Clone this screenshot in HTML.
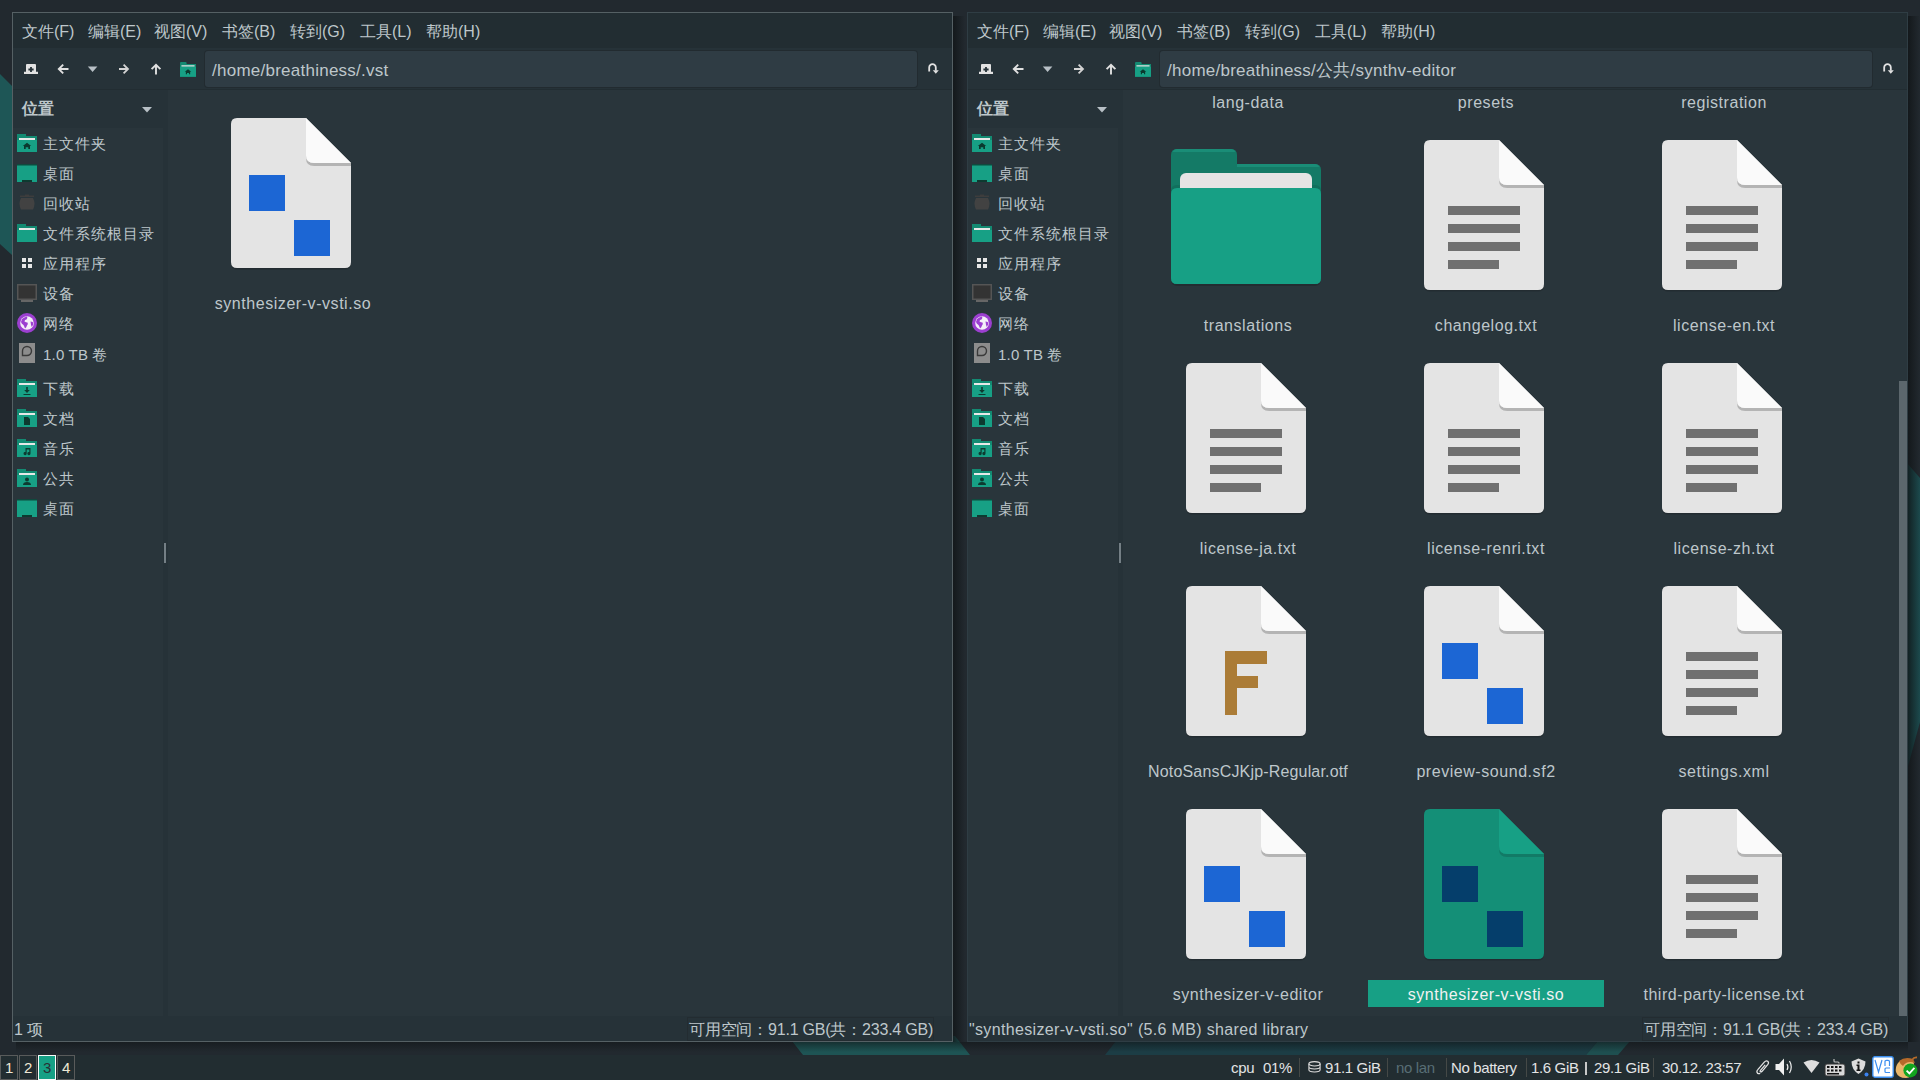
<!DOCTYPE html><html><head><meta charset="utf-8"><style>
*{margin:0;padding:0;box-sizing:border-box}
html,body{width:1920px;height:1080px;overflow:hidden;background:#1d2326;font-family:"Liberation Sans", sans-serif;color:#bec7cb}
div,span,svg{position:absolute}
.t{white-space:nowrap;font-size:16px;line-height:18px;color:#bec7cb}
.lbl{white-space:nowrap;font-size:16px;line-height:20px;color:#bec7cb;letter-spacing:0.55px;text-align:center;width:236px}
</style></head><body>
<div style="left:0;top:0;width:1920px;height:1080px;background:#22292f"></div>
<svg style="left:0;top:0" width="1920" height="1080" viewBox="0 0 1920 1080">
<polygon points="0,74 12,86 12,255 0,244" fill="#1e5656"/>
<polygon points="1907,463 1920,478 1920,722 1907,770" fill="#1c4a4d"/>
<polygon points="792,1041 950,1041 950,1036 955,1036 970,1055 803,1055" fill="#1e5454"/>
<polygon points="1116,1041 1598,1041 1586,1055 1105,1055" fill="#1c3d45"/>
<polygon points="1598,1041 1630,1041 1618,1055 1586,1055" fill="#1e4f50"/>
<defs><linearGradient id="sh" x1="0" x2="1" y1="0" y2="0"><stop offset="0" stop-color="#0f1315" stop-opacity="0.75"/><stop offset="1" stop-color="#0f1315" stop-opacity="0"/></linearGradient></defs><rect x="953" y="16" width="12" height="1026" fill="url(#sh)"/>
<rect x="1908" y="16" width="12" height="1026" fill="url(#sh)"/><linearGradient id="shv" x1="0" x2="0" y1="0" y2="1"><stop offset="0" stop-color="#0f1315" stop-opacity="0.55"/><stop offset="1" stop-color="#0f1315" stop-opacity="0"/></linearGradient><rect x="16" y="1042" width="1892" height="10" fill="url(#shv)"/>
</svg>
<div style="left:12px;top:12px;width:941px;height:1030px;border:1px solid #556064;background:#29353b"></div>
<div style="left:13px;top:13px;width:939px;height:35px;background:#222d32"></div>
<span class="t" style="left:22px;top:23px">文件(F)</span>
<span class="t" style="left:88px;top:23px">编辑(E)</span>
<span class="t" style="left:154px;top:23px">视图(V)</span>
<span class="t" style="left:222px;top:23px">书签(B)</span>
<span class="t" style="left:290px;top:23px">转到(G)</span>
<span class="t" style="left:360px;top:23px">工具(L)</span>
<span class="t" style="left:426px;top:23px">帮助(H)</span>
<div style="left:13px;top:48px;width:939px;height:41px;background:#263238"></div>
<div style="left:13px;top:89px;width:939px;height:1px;background:#222d32"></div>
<svg style="left:24px;top:63px" width="14" height="11" viewBox="0 0 14 11"><path d="M0 11 V8.8 H2 V2 Q2 1 3 1 H11 Q12 1 12 2 V8.8 H14 V11 Z" fill="#e2e2e2"/><path d="M6.1 3.9 h1.8 v1.7 h1.7 v1.8 h-1.7 v1.7 h-1.8 v-1.7 h-1.7 v-1.8 h1.7z" fill="#263238"/></svg>
<svg style="left:57px;top:63px" width="12" height="12" viewBox="0 0 12 12"><path d="M2 6 h9.5 M6.2 1.6 L1.8 6 L6.2 10.4" stroke="#e0e0e0" stroke-width="1.9" fill="none"/></svg>
<svg style="left:87px;top:66px" width="11" height="7" viewBox="0 0 11 7"><path d="M0.8 0.6 h9.6 l-4.8 5.4z" fill="#b8c0c6"/></svg>
<svg style="left:118px;top:63px" width="12" height="12" viewBox="0 0 12 12"><path d="M1 6 h9 M5.6 1.6 L10 6 L5.6 10.4" stroke="#d4d4d4" stroke-width="1.8" fill="none"/></svg>
<svg style="left:150px;top:63px" width="12" height="12" viewBox="0 0 12 12"><path d="M6 11.5 v-9.5 M1.6 6.2 L6 1.8 L10.4 6.2" stroke="#e0e0e0" stroke-width="1.9" fill="none"/></svg>
<svg style="left:180px;top:61.5px" width="16" height="15" viewBox="0 0 17 16"><path d="M0 1 q0 -1 1 -1 h5 q1 0 1 1 v1 h10 v14 h-17z" fill="#138a72"/><rect x="1.5" y="3.5" width="14" height="1.5" fill="#e8e8e8"/><rect x="0" y="5" width="17" height="10.5" fill="#17a085"/><path d="M8.5 7.6 L12 10.4 L10.8 10.4 L10.8 13 L9.6 13 L9.6 11.6 L7.4 11.6 L7.4 13 L6.2 13 L6.2 10.4 L5 10.4 Z" fill="#0a3a2f"/></svg>
<div style="left:205px;top:51px;width:712px;height:36px;background:#2f3c44;border-radius:3px;box-shadow:0 0 0 1px #222b30"></div>
<span class="t" style="left:212px;top:61px;font-size:17px;line-height:19px;letter-spacing:0.25px">/home/breathiness/.vst</span>
<svg style="left:927px;top:62px" width="14" height="13" viewBox="0 0 14 13"><path d="M2.2 9.5 v-4 a3.3 3.3 0 0 1 6.6 0 v3" stroke="#e2e2e2" stroke-width="1.8" fill="none"/><path d="M5.8 8.2 h6 l-3 3.6z" fill="#e2e2e2"/></svg>
<div style="left:13px;top:90px;width:155px;height:38px;background:#263238"></div>
<span class="t" style="left:22px;top:100px;font-weight:bold">位置</span>
<svg style="left:142px;top:107px" width="11" height="6" viewBox="0 0 11 6"><path d="M0 0 h10 l-5 5.5z" fill="#b8c0c6"/></svg>
<div style="left:13px;top:128px;width:150px;height:888px;background:#29353b"></div>
<div style="left:163px;top:90px;width:5px;height:926px;background:#263238"></div>
<div style="left:164px;top:543px;width:2px;height:20px;background:#747f85"></div>
<svg style="left:17px;top:134px" width="20" height="18" viewBox="0 0 20 18"><rect x="0" y="0" width="9" height="3" fill="#138a72"/><rect x="0" y="2" width="20" height="16" fill="#138a72"/><rect x="2" y="4" width="16" height="2" fill="#e8e8e8"/><rect x="0" y="6" width="20" height="12" fill="#17a085"/><path d="M10 8.8 L14.2 12 L13 12 L13 15 L11.3 15 L11.3 13.3 L8.7 13.3 L8.7 15 L7 15 L7 12 L5.8 12 Z" fill="#0a3a2f"/></svg>
<span class="t" style="left:43px;top:135px;font-size:15px;letter-spacing:1.0px">主文件夹</span>
<svg style="left:17px;top:164px" width="20" height="18" viewBox="0 0 20 18"><rect x="0" y="0" width="20" height="18" fill="#17a085"/><rect x="0" y="0" width="20" height="1.5" fill="#0f4a3e"/><rect x="5" y="16" width="10" height="2" fill="#0d3a30"/></svg>
<span class="t" style="left:43px;top:165px;font-size:15px;letter-spacing:1.0px">桌面</span>
<svg style="left:17px;top:194px" width="20" height="18" viewBox="0 0 20 18"><rect x="3" y="1.5" width="14" height="1.5" fill="#3d3d3d"/><rect x="8" y="0.5" width="4" height="1.5" fill="#3d3d3d"/><path d="M4 4 h12 q1.5 3 1.5 5.5 q0 3 -1.5 6 h-12 q-1.5 -3 -1.5 -6 q0 -2.5 1.5 -5.5z" fill="#424242"/></svg>
<span class="t" style="left:43px;top:195px;font-size:15px;letter-spacing:1.0px">回收站</span>
<svg style="left:17px;top:224px" width="20" height="18" viewBox="0 0 20 18"><rect x="0" y="0" width="9" height="3" fill="#138a72"/><rect x="0" y="2" width="20" height="16" fill="#138a72"/><rect x="2" y="4" width="16" height="2" fill="#e8e8e8"/><rect x="0" y="6" width="20" height="12" fill="#17a085"/></svg>
<span class="t" style="left:43px;top:225px;font-size:15px;letter-spacing:1.0px">文件系统根目录</span>
<svg style="left:17px;top:254px" width="20" height="18" viewBox="0 0 20 18"><g fill="#e6e6e6"><rect x="5" y="4" width="4" height="4"/><rect x="11" y="4" width="4" height="4"/><rect x="5" y="10" width="4" height="4"/><rect x="11" y="10" width="4" height="4"/></g></svg>
<span class="t" style="left:43px;top:255px;font-size:15px;letter-spacing:1.0px">应用程序</span>
<svg style="left:17px;top:284px" width="20" height="18" viewBox="0 0 20 18"><rect x="0" y="0" width="20" height="16" fill="#555"/><rect x="1.5" y="1.5" width="17" height="13" fill="#333"/><rect x="4" y="16" width="12" height="2" fill="#666"/></svg>
<span class="t" style="left:43px;top:285px;font-size:15px;letter-spacing:1.0px">设备</span>
<svg style="left:17px;top:313px" width="20" height="20" viewBox="0 0 20 20"><circle cx="10" cy="10" r="10" fill="#9c3fd0"/><circle cx="10" cy="10" r="6.8" fill="#f4f0f8"/><path d="M5 6 q2 -2 5 -2.5 q1 1.5 -0.5 3 q-2 0 -2 2 q1.5 1 3 1 q1 1.5 -0.5 3 q-0.5 2 -2 3 q-0.5 -2 -1.5 -3.5 q-2 -1 -2.5 -3 q0.5 -1.5 1 -3z M13.5 8.5 q1.5 0 2.8 1 q0 3 -1.5 4.5 q-1 -2 -1.3 -5.5z" fill="#9c3fd0"/></svg>
<span class="t" style="left:43px;top:315px;font-size:15px;letter-spacing:1.0px">网络</span>
<svg style="left:17px;top:343px" width="20" height="21" viewBox="0 0 20 21"><rect x="2" y="0" width="16" height="20" fill="#8c8c8c"/><path d="M5.5 11 v-3 a4.5 4.5 0 1 1 4.5 4.5 h-4.5z" fill="none" stroke="#3a3a3a" stroke-width="1.4"/></svg>
<span class="t" style="left:43px;top:346px;font-size:15px;letter-spacing:0.2px">1.0 TB 卷</span>
<svg style="left:17px;top:379px" width="20" height="18" viewBox="0 0 20 18"><rect x="0" y="0" width="9" height="3" fill="#138a72"/><rect x="0" y="2" width="20" height="16" fill="#138a72"/><rect x="2" y="4" width="16" height="2" fill="#e8e8e8"/><rect x="0" y="6" width="20" height="12" fill="#17a085"/><path d="M9.2 8 h1.6 v3 h2 l-2.8 3 l-2.8 -3 h2 Z M6.5 15 h7 v1 h-7z" fill="#0d3a30"/></svg>
<span class="t" style="left:43px;top:380px;font-size:15px;letter-spacing:1.0px">下载</span>
<svg style="left:17px;top:409px" width="20" height="18" viewBox="0 0 20 18"><rect x="0" y="0" width="9" height="3" fill="#138a72"/><rect x="0" y="2" width="20" height="16" fill="#138a72"/><rect x="2" y="4" width="16" height="2" fill="#e8e8e8"/><rect x="0" y="6" width="20" height="12" fill="#17a085"/><path d="M7 8 h4 l2 2 v6 h-6 Z" fill="#0d3a30"/></svg>
<span class="t" style="left:43px;top:410px;font-size:15px;letter-spacing:1.0px">文档</span>
<svg style="left:17px;top:439px" width="20" height="18" viewBox="0 0 20 18"><rect x="0" y="0" width="9" height="3" fill="#138a72"/><rect x="0" y="2" width="20" height="16" fill="#138a72"/><rect x="2" y="4" width="16" height="2" fill="#e8e8e8"/><rect x="0" y="6" width="20" height="12" fill="#17a085"/><path d="M8.5 9 h5 v5.5 a1.6 1.6 0 1 1 -1.2 -1.5 v-2.5 h-2.6 v4 a1.6 1.6 0 1 1 -1.2 -1.5 Z" fill="#0d3a30"/></svg>
<span class="t" style="left:43px;top:440px;font-size:15px;letter-spacing:1.0px">音乐</span>
<svg style="left:17px;top:469px" width="20" height="18" viewBox="0 0 20 18"><rect x="0" y="0" width="9" height="3" fill="#138a72"/><rect x="0" y="2" width="20" height="16" fill="#138a72"/><rect x="2" y="4" width="16" height="2" fill="#e8e8e8"/><rect x="0" y="6" width="20" height="12" fill="#17a085"/><circle cx="10" cy="10.5" r="2" fill="#0d3a30"/><path d="M6 16 q0 -3 4 -3 q4 0 4 3 Z" fill="#0d3a30"/></svg>
<span class="t" style="left:43px;top:470px;font-size:15px;letter-spacing:1.0px">公共</span>
<svg style="left:17px;top:499px" width="20" height="18" viewBox="0 0 20 18"><rect x="0" y="0" width="20" height="18" fill="#17a085"/><rect x="0" y="0" width="20" height="1.5" fill="#0f4a3e"/><rect x="5" y="16" width="10" height="2" fill="#0d3a30"/></svg>
<span class="t" style="left:43px;top:500px;font-size:15px;letter-spacing:1.0px">桌面</span>
<div style="left:168px;top:90px;width:784px;height:926px;background:#29353b"></div>
<svg style="left:231px;top:118px" width="122" height="154" viewBox="0 0 122 154"><path d="M0 8 q0 -6 6 -6 h69 l45 45 v99 q0 6 -6 6 h-108 q-6 0 -6 -6z" fill="#1d2427" opacity="0.5" transform="translate(0,-0.5)"/><path d="M0 6 q0 -6 6 -6 h69 l45 45 v99 q0 6 -6 6 h-108 q-6 0 -6 -6z" fill="#e4e4e4"/><path d="M75 37 q0 8 8 8 h37 v3 h-37 q-8 0 -8 -8z" fill="#b4b4b4"/><path d="M75 0 l45 45 h-37 q-8 0 -8 -8z" fill="#fafafa"/><rect x="18" y="57" width="36" height="36" fill="#1c66d4"/><rect x="63" y="102" width="36" height="36" fill="#1c66d4"/></svg>
<span class="lbl" style="left:175px;top:294px">synthesizer-v-vsti.so</span>
<div style="left:13px;top:1016px;width:939px;height:25px;background:#263238"></div>
<span class="t" style="left:14px;top:1021px;letter-spacing:0px">1 项</span>
<div style="left:687px;top:1017px;width:247px;height:24px;border:1px solid #232c31"></div>
<span class="t" style="left:689px;top:1021px;letter-spacing:-0.2px">可用空间：91.1 GB(共：233.4 GB)</span>
<div style="left:967px;top:12px;width:941px;height:1030px;border:1px solid #2f3d44;background:#29353b"></div>
<div style="left:968px;top:13px;width:939px;height:35px;background:#222d32"></div>
<span class="t" style="left:977px;top:23px">文件(F)</span>
<span class="t" style="left:1043px;top:23px">编辑(E)</span>
<span class="t" style="left:1109px;top:23px">视图(V)</span>
<span class="t" style="left:1177px;top:23px">书签(B)</span>
<span class="t" style="left:1245px;top:23px">转到(G)</span>
<span class="t" style="left:1315px;top:23px">工具(L)</span>
<span class="t" style="left:1381px;top:23px">帮助(H)</span>
<div style="left:968px;top:48px;width:939px;height:41px;background:#263238"></div>
<div style="left:968px;top:89px;width:939px;height:1px;background:#222d32"></div>
<svg style="left:979px;top:63px" width="14" height="11" viewBox="0 0 14 11"><path d="M0 11 V8.8 H2 V2 Q2 1 3 1 H11 Q12 1 12 2 V8.8 H14 V11 Z" fill="#e2e2e2"/><path d="M6.1 3.9 h1.8 v1.7 h1.7 v1.8 h-1.7 v1.7 h-1.8 v-1.7 h-1.7 v-1.8 h1.7z" fill="#263238"/></svg>
<svg style="left:1012px;top:63px" width="12" height="12" viewBox="0 0 12 12"><path d="M2 6 h9.5 M6.2 1.6 L1.8 6 L6.2 10.4" stroke="#e0e0e0" stroke-width="1.9" fill="none"/></svg>
<svg style="left:1042px;top:66px" width="11" height="7" viewBox="0 0 11 7"><path d="M0.8 0.6 h9.6 l-4.8 5.4z" fill="#b8c0c6"/></svg>
<svg style="left:1073px;top:63px" width="12" height="12" viewBox="0 0 12 12"><path d="M1 6 h9 M5.6 1.6 L10 6 L5.6 10.4" stroke="#d4d4d4" stroke-width="1.8" fill="none"/></svg>
<svg style="left:1105px;top:63px" width="12" height="12" viewBox="0 0 12 12"><path d="M6 11.5 v-9.5 M1.6 6.2 L6 1.8 L10.4 6.2" stroke="#e0e0e0" stroke-width="1.9" fill="none"/></svg>
<svg style="left:1135px;top:61.5px" width="16" height="15" viewBox="0 0 17 16"><path d="M0 1 q0 -1 1 -1 h5 q1 0 1 1 v1 h10 v14 h-17z" fill="#138a72"/><rect x="1.5" y="3.5" width="14" height="1.5" fill="#e8e8e8"/><rect x="0" y="5" width="17" height="10.5" fill="#17a085"/><path d="M8.5 7.6 L12 10.4 L10.8 10.4 L10.8 13 L9.6 13 L9.6 11.6 L7.4 11.6 L7.4 13 L6.2 13 L6.2 10.4 L5 10.4 Z" fill="#0a3a2f"/></svg>
<div style="left:1160px;top:51px;width:712px;height:36px;background:#2f3c44;border-radius:3px;box-shadow:0 0 0 1px #222b30"></div>
<span class="t" style="left:1167px;top:61px;font-size:17px;line-height:19px;letter-spacing:0.25px">/home/breathiness/公共/synthv-editor</span>
<svg style="left:1882px;top:62px" width="14" height="13" viewBox="0 0 14 13"><path d="M2.2 9.5 v-4 a3.3 3.3 0 0 1 6.6 0 v3" stroke="#e2e2e2" stroke-width="1.8" fill="none"/><path d="M5.8 8.2 h6 l-3 3.6z" fill="#e2e2e2"/></svg>
<div style="left:968px;top:90px;width:155px;height:38px;background:#263238"></div>
<span class="t" style="left:977px;top:100px;font-weight:bold">位置</span>
<svg style="left:1097px;top:107px" width="11" height="6" viewBox="0 0 11 6"><path d="M0 0 h10 l-5 5.5z" fill="#b8c0c6"/></svg>
<div style="left:968px;top:128px;width:150px;height:888px;background:#29353b"></div>
<div style="left:1118px;top:90px;width:5px;height:926px;background:#263238"></div>
<div style="left:1119px;top:543px;width:2px;height:20px;background:#747f85"></div>
<svg style="left:972px;top:134px" width="20" height="18" viewBox="0 0 20 18"><rect x="0" y="0" width="9" height="3" fill="#138a72"/><rect x="0" y="2" width="20" height="16" fill="#138a72"/><rect x="2" y="4" width="16" height="2" fill="#e8e8e8"/><rect x="0" y="6" width="20" height="12" fill="#17a085"/><path d="M10 8.8 L14.2 12 L13 12 L13 15 L11.3 15 L11.3 13.3 L8.7 13.3 L8.7 15 L7 15 L7 12 L5.8 12 Z" fill="#0a3a2f"/></svg>
<span class="t" style="left:998px;top:135px;font-size:15px;letter-spacing:1.0px">主文件夹</span>
<svg style="left:972px;top:164px" width="20" height="18" viewBox="0 0 20 18"><rect x="0" y="0" width="20" height="18" fill="#17a085"/><rect x="0" y="0" width="20" height="1.5" fill="#0f4a3e"/><rect x="5" y="16" width="10" height="2" fill="#0d3a30"/></svg>
<span class="t" style="left:998px;top:165px;font-size:15px;letter-spacing:1.0px">桌面</span>
<svg style="left:972px;top:194px" width="20" height="18" viewBox="0 0 20 18"><rect x="3" y="1.5" width="14" height="1.5" fill="#3d3d3d"/><rect x="8" y="0.5" width="4" height="1.5" fill="#3d3d3d"/><path d="M4 4 h12 q1.5 3 1.5 5.5 q0 3 -1.5 6 h-12 q-1.5 -3 -1.5 -6 q0 -2.5 1.5 -5.5z" fill="#424242"/></svg>
<span class="t" style="left:998px;top:195px;font-size:15px;letter-spacing:1.0px">回收站</span>
<svg style="left:972px;top:224px" width="20" height="18" viewBox="0 0 20 18"><rect x="0" y="0" width="9" height="3" fill="#138a72"/><rect x="0" y="2" width="20" height="16" fill="#138a72"/><rect x="2" y="4" width="16" height="2" fill="#e8e8e8"/><rect x="0" y="6" width="20" height="12" fill="#17a085"/></svg>
<span class="t" style="left:998px;top:225px;font-size:15px;letter-spacing:1.0px">文件系统根目录</span>
<svg style="left:972px;top:254px" width="20" height="18" viewBox="0 0 20 18"><g fill="#e6e6e6"><rect x="5" y="4" width="4" height="4"/><rect x="11" y="4" width="4" height="4"/><rect x="5" y="10" width="4" height="4"/><rect x="11" y="10" width="4" height="4"/></g></svg>
<span class="t" style="left:998px;top:255px;font-size:15px;letter-spacing:1.0px">应用程序</span>
<svg style="left:972px;top:284px" width="20" height="18" viewBox="0 0 20 18"><rect x="0" y="0" width="20" height="16" fill="#555"/><rect x="1.5" y="1.5" width="17" height="13" fill="#333"/><rect x="4" y="16" width="12" height="2" fill="#666"/></svg>
<span class="t" style="left:998px;top:285px;font-size:15px;letter-spacing:1.0px">设备</span>
<svg style="left:972px;top:313px" width="20" height="20" viewBox="0 0 20 20"><circle cx="10" cy="10" r="10" fill="#9c3fd0"/><circle cx="10" cy="10" r="6.8" fill="#f4f0f8"/><path d="M5 6 q2 -2 5 -2.5 q1 1.5 -0.5 3 q-2 0 -2 2 q1.5 1 3 1 q1 1.5 -0.5 3 q-0.5 2 -2 3 q-0.5 -2 -1.5 -3.5 q-2 -1 -2.5 -3 q0.5 -1.5 1 -3z M13.5 8.5 q1.5 0 2.8 1 q0 3 -1.5 4.5 q-1 -2 -1.3 -5.5z" fill="#9c3fd0"/></svg>
<span class="t" style="left:998px;top:315px;font-size:15px;letter-spacing:1.0px">网络</span>
<svg style="left:972px;top:343px" width="20" height="21" viewBox="0 0 20 21"><rect x="2" y="0" width="16" height="20" fill="#8c8c8c"/><path d="M5.5 11 v-3 a4.5 4.5 0 1 1 4.5 4.5 h-4.5z" fill="none" stroke="#3a3a3a" stroke-width="1.4"/></svg>
<span class="t" style="left:998px;top:346px;font-size:15px;letter-spacing:0.2px">1.0 TB 卷</span>
<svg style="left:972px;top:379px" width="20" height="18" viewBox="0 0 20 18"><rect x="0" y="0" width="9" height="3" fill="#138a72"/><rect x="0" y="2" width="20" height="16" fill="#138a72"/><rect x="2" y="4" width="16" height="2" fill="#e8e8e8"/><rect x="0" y="6" width="20" height="12" fill="#17a085"/><path d="M9.2 8 h1.6 v3 h2 l-2.8 3 l-2.8 -3 h2 Z M6.5 15 h7 v1 h-7z" fill="#0d3a30"/></svg>
<span class="t" style="left:998px;top:380px;font-size:15px;letter-spacing:1.0px">下载</span>
<svg style="left:972px;top:409px" width="20" height="18" viewBox="0 0 20 18"><rect x="0" y="0" width="9" height="3" fill="#138a72"/><rect x="0" y="2" width="20" height="16" fill="#138a72"/><rect x="2" y="4" width="16" height="2" fill="#e8e8e8"/><rect x="0" y="6" width="20" height="12" fill="#17a085"/><path d="M7 8 h4 l2 2 v6 h-6 Z" fill="#0d3a30"/></svg>
<span class="t" style="left:998px;top:410px;font-size:15px;letter-spacing:1.0px">文档</span>
<svg style="left:972px;top:439px" width="20" height="18" viewBox="0 0 20 18"><rect x="0" y="0" width="9" height="3" fill="#138a72"/><rect x="0" y="2" width="20" height="16" fill="#138a72"/><rect x="2" y="4" width="16" height="2" fill="#e8e8e8"/><rect x="0" y="6" width="20" height="12" fill="#17a085"/><path d="M8.5 9 h5 v5.5 a1.6 1.6 0 1 1 -1.2 -1.5 v-2.5 h-2.6 v4 a1.6 1.6 0 1 1 -1.2 -1.5 Z" fill="#0d3a30"/></svg>
<span class="t" style="left:998px;top:440px;font-size:15px;letter-spacing:1.0px">音乐</span>
<svg style="left:972px;top:469px" width="20" height="18" viewBox="0 0 20 18"><rect x="0" y="0" width="9" height="3" fill="#138a72"/><rect x="0" y="2" width="20" height="16" fill="#138a72"/><rect x="2" y="4" width="16" height="2" fill="#e8e8e8"/><rect x="0" y="6" width="20" height="12" fill="#17a085"/><circle cx="10" cy="10.5" r="2" fill="#0d3a30"/><path d="M6 16 q0 -3 4 -3 q4 0 4 3 Z" fill="#0d3a30"/></svg>
<span class="t" style="left:998px;top:470px;font-size:15px;letter-spacing:1.0px">公共</span>
<svg style="left:972px;top:499px" width="20" height="18" viewBox="0 0 20 18"><rect x="0" y="0" width="20" height="18" fill="#17a085"/><rect x="0" y="0" width="20" height="1.5" fill="#0f4a3e"/><rect x="5" y="16" width="10" height="2" fill="#0d3a30"/></svg>
<span class="t" style="left:998px;top:500px;font-size:15px;letter-spacing:1.0px">桌面</span>
<div style="left:1123px;top:90px;width:784px;height:926px;background:#29353b"></div>
<span class="lbl" style="left:1130px;top:93px">lang-data</span>
<span class="lbl" style="left:1368px;top:93px">presets</span>
<span class="lbl" style="left:1606px;top:93px">registration</span>
<svg style="left:1171px;top:149px" width="150" height="138" viewBox="0 0 150 138"><rect x="0" y="41" width="150" height="96" rx="6" fill="#1d2427" opacity="0.5"/><path d="M0 6 q0 -6 6 -6 h54 q6 0 6 6 v9 h78 q6 0 6 6 v108 q0 6 -6 6 h-138 q-6 0 -6 -6z" fill="#147a66"/><path d="M0 42 q0 -6 6 -6 h138 q6 0 6 6 v3 h-150z" fill="#126f5d"/><path d="M1.5 3 q1.5 -3 4.5 -3 h54 q3 0 4.5 3z M66 15 h78 q3 0 4.5 3 h-82.5z" fill="#1a8d77"/><rect x="9" y="24" width="132" height="40" rx="6" fill="#e4e4e4"/><path d="M0 45 q0 -6 6 -6 h138 q6 0 6 6 v84 q0 6 -6 6 h-138 q-6 0 -6 -6z" fill="#17a085"/></svg>
<span class="lbl" style="left:1130px;top:316px">translations</span>
<svg style="left:1424px;top:140px" width="122" height="154" viewBox="0 0 122 154"><path d="M0 8 q0 -6 6 -6 h69 l45 45 v99 q0 6 -6 6 h-108 q-6 0 -6 -6z" fill="#1d2427" opacity="0.5" transform="translate(0,-0.5)"/><path d="M0 6 q0 -6 6 -6 h69 l45 45 v99 q0 6 -6 6 h-108 q-6 0 -6 -6z" fill="#e4e4e4"/><path d="M75 37 q0 8 8 8 h37 v3 h-37 q-8 0 -8 -8z" fill="#b4b4b4"/><path d="M75 0 l45 45 h-37 q-8 0 -8 -8z" fill="#fafafa"/><rect x="24" y="66" width="72" height="9" fill="#707070"/><rect x="24" y="84" width="72" height="9" fill="#707070"/><rect x="24" y="102" width="72" height="9" fill="#707070"/><rect x="24" y="120" width="51" height="9" fill="#707070"/></svg>
<span class="lbl" style="left:1368px;top:316px">changelog.txt</span>
<svg style="left:1662px;top:140px" width="122" height="154" viewBox="0 0 122 154"><path d="M0 8 q0 -6 6 -6 h69 l45 45 v99 q0 6 -6 6 h-108 q-6 0 -6 -6z" fill="#1d2427" opacity="0.5" transform="translate(0,-0.5)"/><path d="M0 6 q0 -6 6 -6 h69 l45 45 v99 q0 6 -6 6 h-108 q-6 0 -6 -6z" fill="#e4e4e4"/><path d="M75 37 q0 8 8 8 h37 v3 h-37 q-8 0 -8 -8z" fill="#b4b4b4"/><path d="M75 0 l45 45 h-37 q-8 0 -8 -8z" fill="#fafafa"/><rect x="24" y="66" width="72" height="9" fill="#707070"/><rect x="24" y="84" width="72" height="9" fill="#707070"/><rect x="24" y="102" width="72" height="9" fill="#707070"/><rect x="24" y="120" width="51" height="9" fill="#707070"/></svg>
<span class="lbl" style="left:1606px;top:316px">license-en.txt</span>
<svg style="left:1186px;top:363px" width="122" height="154" viewBox="0 0 122 154"><path d="M0 8 q0 -6 6 -6 h69 l45 45 v99 q0 6 -6 6 h-108 q-6 0 -6 -6z" fill="#1d2427" opacity="0.5" transform="translate(0,-0.5)"/><path d="M0 6 q0 -6 6 -6 h69 l45 45 v99 q0 6 -6 6 h-108 q-6 0 -6 -6z" fill="#e4e4e4"/><path d="M75 37 q0 8 8 8 h37 v3 h-37 q-8 0 -8 -8z" fill="#b4b4b4"/><path d="M75 0 l45 45 h-37 q-8 0 -8 -8z" fill="#fafafa"/><rect x="24" y="66" width="72" height="9" fill="#707070"/><rect x="24" y="84" width="72" height="9" fill="#707070"/><rect x="24" y="102" width="72" height="9" fill="#707070"/><rect x="24" y="120" width="51" height="9" fill="#707070"/></svg>
<span class="lbl" style="left:1130px;top:539px">license-ja.txt</span>
<svg style="left:1424px;top:363px" width="122" height="154" viewBox="0 0 122 154"><path d="M0 8 q0 -6 6 -6 h69 l45 45 v99 q0 6 -6 6 h-108 q-6 0 -6 -6z" fill="#1d2427" opacity="0.5" transform="translate(0,-0.5)"/><path d="M0 6 q0 -6 6 -6 h69 l45 45 v99 q0 6 -6 6 h-108 q-6 0 -6 -6z" fill="#e4e4e4"/><path d="M75 37 q0 8 8 8 h37 v3 h-37 q-8 0 -8 -8z" fill="#b4b4b4"/><path d="M75 0 l45 45 h-37 q-8 0 -8 -8z" fill="#fafafa"/><rect x="24" y="66" width="72" height="9" fill="#707070"/><rect x="24" y="84" width="72" height="9" fill="#707070"/><rect x="24" y="102" width="72" height="9" fill="#707070"/><rect x="24" y="120" width="51" height="9" fill="#707070"/></svg>
<span class="lbl" style="left:1368px;top:539px">license-renri.txt</span>
<svg style="left:1662px;top:363px" width="122" height="154" viewBox="0 0 122 154"><path d="M0 8 q0 -6 6 -6 h69 l45 45 v99 q0 6 -6 6 h-108 q-6 0 -6 -6z" fill="#1d2427" opacity="0.5" transform="translate(0,-0.5)"/><path d="M0 6 q0 -6 6 -6 h69 l45 45 v99 q0 6 -6 6 h-108 q-6 0 -6 -6z" fill="#e4e4e4"/><path d="M75 37 q0 8 8 8 h37 v3 h-37 q-8 0 -8 -8z" fill="#b4b4b4"/><path d="M75 0 l45 45 h-37 q-8 0 -8 -8z" fill="#fafafa"/><rect x="24" y="66" width="72" height="9" fill="#707070"/><rect x="24" y="84" width="72" height="9" fill="#707070"/><rect x="24" y="102" width="72" height="9" fill="#707070"/><rect x="24" y="120" width="51" height="9" fill="#707070"/></svg>
<span class="lbl" style="left:1606px;top:539px">license-zh.txt</span>
<svg style="left:1186px;top:586px" width="122" height="154" viewBox="0 0 122 154"><path d="M0 8 q0 -6 6 -6 h69 l45 45 v99 q0 6 -6 6 h-108 q-6 0 -6 -6z" fill="#1d2427" opacity="0.5" transform="translate(0,-0.5)"/><path d="M0 6 q0 -6 6 -6 h69 l45 45 v99 q0 6 -6 6 h-108 q-6 0 -6 -6z" fill="#e4e4e4"/><path d="M75 37 q0 8 8 8 h37 v3 h-37 q-8 0 -8 -8z" fill="#b4b4b4"/><path d="M75 0 l45 45 h-37 q-8 0 -8 -8z" fill="#fafafa"/><path d="M39 65 h42 v13 h-30 v12 h21 v12 h-21 v27 h-12z" fill="#ab7c37"/></svg>
<span class="lbl" style="left:1130px;top:762px;letter-spacing:0.17px">NotoSansCJKjp-Regular.otf</span>
<svg style="left:1424px;top:586px" width="122" height="154" viewBox="0 0 122 154"><path d="M0 8 q0 -6 6 -6 h69 l45 45 v99 q0 6 -6 6 h-108 q-6 0 -6 -6z" fill="#1d2427" opacity="0.5" transform="translate(0,-0.5)"/><path d="M0 6 q0 -6 6 -6 h69 l45 45 v99 q0 6 -6 6 h-108 q-6 0 -6 -6z" fill="#e4e4e4"/><path d="M75 37 q0 8 8 8 h37 v3 h-37 q-8 0 -8 -8z" fill="#b4b4b4"/><path d="M75 0 l45 45 h-37 q-8 0 -8 -8z" fill="#fafafa"/><rect x="18" y="57" width="36" height="36" fill="#1c66d4"/><rect x="63" y="102" width="36" height="36" fill="#1c66d4"/></svg>
<span class="lbl" style="left:1368px;top:762px">preview-sound.sf2</span>
<svg style="left:1662px;top:586px" width="122" height="154" viewBox="0 0 122 154"><path d="M0 8 q0 -6 6 -6 h69 l45 45 v99 q0 6 -6 6 h-108 q-6 0 -6 -6z" fill="#1d2427" opacity="0.5" transform="translate(0,-0.5)"/><path d="M0 6 q0 -6 6 -6 h69 l45 45 v99 q0 6 -6 6 h-108 q-6 0 -6 -6z" fill="#e4e4e4"/><path d="M75 37 q0 8 8 8 h37 v3 h-37 q-8 0 -8 -8z" fill="#b4b4b4"/><path d="M75 0 l45 45 h-37 q-8 0 -8 -8z" fill="#fafafa"/><rect x="24" y="66" width="72" height="9" fill="#707070"/><rect x="24" y="84" width="72" height="9" fill="#707070"/><rect x="24" y="102" width="72" height="9" fill="#707070"/><rect x="24" y="120" width="51" height="9" fill="#707070"/></svg>
<span class="lbl" style="left:1606px;top:762px">settings.xml</span>
<svg style="left:1186px;top:809px" width="122" height="154" viewBox="0 0 122 154"><path d="M0 8 q0 -6 6 -6 h69 l45 45 v99 q0 6 -6 6 h-108 q-6 0 -6 -6z" fill="#1d2427" opacity="0.5" transform="translate(0,-0.5)"/><path d="M0 6 q0 -6 6 -6 h69 l45 45 v99 q0 6 -6 6 h-108 q-6 0 -6 -6z" fill="#e4e4e4"/><path d="M75 37 q0 8 8 8 h37 v3 h-37 q-8 0 -8 -8z" fill="#b4b4b4"/><path d="M75 0 l45 45 h-37 q-8 0 -8 -8z" fill="#fafafa"/><rect x="18" y="57" width="36" height="36" fill="#1c66d4"/><rect x="63" y="102" width="36" height="36" fill="#1c66d4"/></svg>
<span class="lbl" style="left:1130px;top:985px">synthesizer-v-editor</span>
<svg style="left:1424px;top:809px" width="122" height="154" viewBox="0 0 122 154"><path d="M0 8 q0 -6 6 -6 h69 l45 45 v99 q0 6 -6 6 h-108 q-6 0 -6 -6z" fill="#1d2427" opacity="0.5" transform="translate(0,-0.5)"/><path d="M0 6 q0 -6 6 -6 h69 l45 45 v99 q0 6 -6 6 h-108 q-6 0 -6 -6z" fill="#148f77"/><path d="M75 37 q0 8 8 8 h37 v3 h-37 q-8 0 -8 -8z" fill="#127a66"/><path d="M75 0 l45 45 h-37 q-8 0 -8 -8z" fill="#17a085"/><rect x="18" y="57" width="36" height="36" fill="#053e6b"/><rect x="63" y="102" width="36" height="36" fill="#053e6b"/></svg>
<div style="left:1368px;top:980px;width:236px;height:27px;background:#17a085"></div>
<span class="lbl" style="left:1368px;top:985px;color:#f2f2f2">synthesizer-v-vsti.so</span>
<svg style="left:1662px;top:809px" width="122" height="154" viewBox="0 0 122 154"><path d="M0 8 q0 -6 6 -6 h69 l45 45 v99 q0 6 -6 6 h-108 q-6 0 -6 -6z" fill="#1d2427" opacity="0.5" transform="translate(0,-0.5)"/><path d="M0 6 q0 -6 6 -6 h69 l45 45 v99 q0 6 -6 6 h-108 q-6 0 -6 -6z" fill="#e4e4e4"/><path d="M75 37 q0 8 8 8 h37 v3 h-37 q-8 0 -8 -8z" fill="#b4b4b4"/><path d="M75 0 l45 45 h-37 q-8 0 -8 -8z" fill="#fafafa"/><rect x="24" y="66" width="72" height="9" fill="#707070"/><rect x="24" y="84" width="72" height="9" fill="#707070"/><rect x="24" y="102" width="72" height="9" fill="#707070"/><rect x="24" y="120" width="51" height="9" fill="#707070"/></svg>
<span class="lbl" style="left:1606px;top:985px">third-party-license.txt</span>
<div style="left:1899px;top:381px;width:8px;height:635px;background:#5c676d"></div>
<div style="left:968px;top:1016px;width:939px;height:25px;background:#263238"></div>
<span class="t" style="left:969px;top:1021px;letter-spacing:0.34px">"synthesizer-v-vsti.so" (5.6 MB) shared library</span>
<div style="left:1642px;top:1017px;width:247px;height:24px;border:1px solid #232c31"></div>
<span class="t" style="left:1644px;top:1021px;letter-spacing:-0.2px">可用空间：91.1 GB(共：233.4 GB)</span>
<div style="left:0;top:1055px;width:1920px;height:25px;background:#222d31"></div>
<div style="left:0px;top:1055px;width:18px;height:25px;border:1px solid #595b5b;background:#222d31"></div>
<span class="t" style="left:5px;top:1059px;font-size:15px;color:#eee8d5">1</span>
<div style="left:19px;top:1055px;width:18px;height:25px;border:1px solid #595b5b;background:#222d31"></div>
<span class="t" style="left:24px;top:1059px;font-size:15px;color:#eee8d5">2</span>
<div style="left:38px;top:1055px;width:18px;height:25px;border:1px solid #f9faf9;background:#16a085"></div>
<span class="t" style="left:43px;top:1059px;font-size:15px;color:#292f34">3</span>
<div style="left:57px;top:1055px;width:18px;height:25px;border:1px solid #595b5b;background:#222d31"></div>
<span class="t" style="left:62px;top:1059px;font-size:15px;color:#eee8d5">4</span>
<span class="t" style="left:1231px;top:1059px;font-size:15px;letter-spacing:-0.35px;color:#e2e4e5">cpu</span>
<span class="t" style="left:1263px;top:1059px;font-size:15px;letter-spacing:-0.35px;color:#e2e4e5">01%</span>
<div style="left:1299px;top:1058px;width:1px;height:19px;background:#454947"></div>
<svg style="left:1308px;top:1061px" width="13" height="12" viewBox="0 0 13 12"><g fill="none" stroke="#dcdcdc" stroke-width="1.1"><ellipse cx="6.5" cy="2.8" rx="5.6" ry="2.2"/><path d="M0.9 2.8 v6 q0 2.2 5.6 2.2 q5.6 0 5.6 -2.2 v-6 M0.9 5.8 q0 2.2 5.6 2.2 q5.6 0 5.6 -2.2"/></g></svg>
<span class="t" style="left:1325px;top:1059px;font-size:15px;letter-spacing:-0.35px;color:#e2e4e5">91.1 GiB</span>
<div style="left:1387px;top:1058px;width:1px;height:19px;background:#454947"></div>
<span class="t" style="left:1396px;top:1059px;font-size:15px;letter-spacing:-0.35px;color:#586e75">no lan</span>
<div style="left:1446px;top:1058px;width:1px;height:19px;background:#454947"></div>
<span class="t" style="left:1451px;top:1059px;font-size:15px;letter-spacing:-0.35px;color:#e2e4e5">No battery</span>
<div style="left:1526px;top:1058px;width:1px;height:19px;background:#454947"></div>
<span class="t" style="left:1531px;top:1059px;font-size:15px;letter-spacing:-0.35px;color:#e2e4e5">1.6 GiB</span>
<div style="left:1585px;top:1062px;width:2px;height:13px;background:#c8c8c8"></div>
<span class="t" style="left:1594px;top:1059px;font-size:15px;letter-spacing:-0.35px;color:#e2e4e5">29.1 GiB</span>
<div style="left:1653px;top:1058px;width:1px;height:19px;background:#454947"></div>
<span class="t" style="left:1662px;top:1059px;font-size:15px;letter-spacing:-0.35px;color:#e2e4e5">30.12. 23:57</span>
<svg style="left:1756px;top:1059px" width="15" height="16" viewBox="0 0 15 16"><path d="M4.2 14.2 q-2 1.2 -3 -0.6 q-0.8 -1.5 0.6 -3 l6.5 -7.5 q1.8 -2 3.4 -0.8 q1.6 1.4 0 3.4 l-5.6 6.6 q-1 1 -1.7 0.4 q-0.6 -0.6 0.3 -1.6 l4.5 -5.2" fill="none" stroke="#e4e4e4" stroke-width="1.3"/></svg>
<svg style="left:1775px;top:1058px" width="21" height="18" viewBox="0 0 21 18"><path d="M0.5 6 h3.5 l5 -5.5 v17 l-5 -5.5 h-3.5z" fill="#f0f0f0"/><path d="M12 6 q1.8 3 0 6 M14.5 3 q3.5 6 0 12" fill="none" stroke="#f0f0f0" stroke-width="1.2"/></svg>
<svg style="left:1803px;top:1059px" width="17" height="15" viewBox="0 0 17 15"><path d="M0.5 3.5 q8 -5 16 0 l-8 10.5z" fill="#dedede"/></svg>
<svg style="left:1824px;top:1058px" width="22" height="19" viewBox="0 0 22 19"><path d="M10 1 v2 q0 1 1 1 h3 q1 0 1 1 v1" fill="none" stroke="#bdbdbd" stroke-width="1.2"/><rect x="1" y="6" width="20" height="12" rx="2" fill="#d8d8d8" stroke="#333" stroke-width="1"/><g fill="#111"><rect x="3" y="8" width="2.5" height="2"/><rect x="7" y="8" width="2.5" height="2"/><rect x="11" y="8" width="2.5" height="2"/><rect x="15" y="8" width="2.5" height="2"/><rect x="3" y="11.5" width="2.5" height="2"/><rect x="7" y="11.5" width="2.5" height="2"/><rect x="11" y="11.5" width="2.5" height="2"/><rect x="15" y="11.5" width="2.5" height="2"/><rect x="3" y="15" width="12" height="1.5"/></g></svg>
<svg style="left:1851px;top:1058px" width="18" height="19" viewBox="0 0 18 19"><path d="M7.5 0.5 l7 3 q0 8 -7 12.5 q-7 -4.5 -7 -12.5z" fill="#dcdcdc"/><rect x="6.5" y="3.5" width="2" height="2" fill="#111"/><path d="M5.5 6.5 h3 v5 h1 v1.5 h-4 v-1.5 h1 v-3.5 h-1z" fill="#111"/><circle cx="15.5" cy="16.5" r="2" fill="#3a82f0"/></svg>
<svg style="left:1872px;top:1056px" width="22" height="22" viewBox="0 0 22 22"><rect x="0.8" y="0.8" width="20.4" height="20.4" rx="2" fill="#fff" stroke="#3d8ff0" stroke-width="1.4"/><path d="M3 4 l3.5 12 l3.5 -12" fill="none" stroke="#3d8ff0" stroke-width="1.2"/><path d="M13 10 v-4.5 q0 -1.2 1.5 -1.2 h1.5 q1.5 0 1.5 1.2 v4.5 M18 12 h-4 q-1 0 -1 1 v2.5 q0 1 1 1 h4" fill="none" stroke="#3d8ff0" stroke-width="1.2"/></svg>
<svg style="left:1895px;top:1056px" width="25" height="24" viewBox="0 0 25 24"><path d="M3 7 q5 -6 14 -3 q3 3 2 10 q-2 8 -8 8 q-8 0 -10 -6 q-1 -5 2 -9z" fill="#e9b66a"/><path d="M4 5 q6 -5 14 -2 l2 4 q-8 -3 -12 3 q-3 -2 -4 -5z" fill="#b56a2a"/><path d="M17 4 q2 -3 5 -2.5" stroke="#b56a2a" stroke-width="1.8" fill="none"/><circle cx="15.4" cy="14.4" r="7" fill="#12a51f"/><path d="M11.6 14.6 l2.8 2.8 l5 -5.6" stroke="#fff" stroke-width="1.8" fill="none"/></svg>
</body></html>
